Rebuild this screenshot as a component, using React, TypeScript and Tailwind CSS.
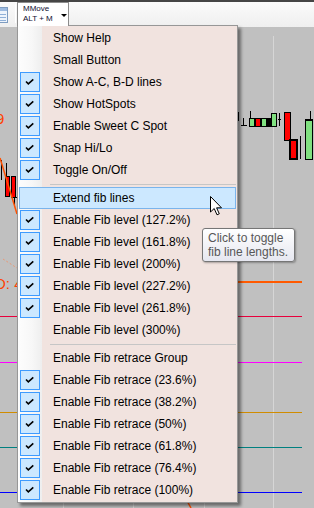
import React from 'react'

type Item = { label: string; checked?: boolean; hot?: boolean }

const groupA: Item[] = [
  { label: 'Show Help' },
  { label: 'Small Button' },
  { label: 'Show A-C, B-D lines', checked: true },
  { label: 'Show HotSpots', checked: true },
  { label: 'Enable Sweet C Spot', checked: true },
  { label: 'Snap Hi/Lo', checked: true },
  { label: 'Toggle On/Off', checked: true },
]

const groupB: Item[] = [
  { label: 'Extend fib lines', hot: true },
  { label: 'Enable Fib level (127.2%)', checked: true },
  { label: 'Enable Fib level (161.8%)', checked: true },
  { label: 'Enable Fib level (200%)', checked: true },
  { label: 'Enable Fib level (227.2%)', checked: true },
  { label: 'Enable Fib level (261.8%)', checked: true },
  { label: 'Enable Fib level (300%)' },
]

const groupC: Item[] = [
  { label: 'Enable Fib retrace Group' },
  { label: 'Enable Fib retrace (23.6%)', checked: true },
  { label: 'Enable Fib retrace (38.2%)', checked: true },
  { label: 'Enable Fib retrace (50%)', checked: true },
  { label: 'Enable Fib retrace (61.8%)', checked: true },
  { label: 'Enable Fib retrace (76.4%)', checked: true },
  { label: 'Enable Fib retrace (100%)', checked: true },
]

function CheckBox() {
  return (
    <div className="w-[20px] h-[20px] border border-[#3d9bff] bg-[#cce8ff] shrink-0">
      <svg width="18" height="18" viewBox="0 0 18 18">
        <path d="M5 8.5 L7.3 10.8 L12.3 6.3" fill="none" stroke="#000" strokeWidth="1.6" />
      </svg>
    </div>
  )
}

function MenuItem({ item }: { item: Item }) {
  return (
    <div
      className={
        item.hot
          ? 'h-[22px] mx-[1px] flex items-center border border-[#7ab4ec] bg-[#cce8ff]'
          : 'h-[22px] mx-[1px] flex items-center border border-transparent'
      }
    >
      {item.checked ? <CheckBox /> : <div className="w-[20px] h-[20px] shrink-0" />}
      <span className="ml-[13px] text-[12px] text-black whitespace-nowrap">{item.label}</span>
    </div>
  )
}

function Separator() {
  return (
    <div className="h-[6px] pt-[3px] pl-[32px] pr-[1px]">
      <div className="h-px bg-[#c6c6c6]" />
    </div>
  )
}

function Chart() {
  return (
    <svg className="absolute left-0 top-0" width="314" height="481" viewBox="0 27 314 481">
      {/* grid */}
      <line x1="63.5" y1="36" x2="63.5" y2="508" stroke="#d6d6d6" />
      <line x1="133.5" y1="36" x2="133.5" y2="508" stroke="#d6d6d6" />
      <line x1="204.5" y1="36" x2="204.5" y2="508" stroke="#d6d6d6" />
      <line x1="273.5" y1="36" x2="273.5" y2="508" stroke="#d6d6d6" />

      {/* fib lines */}
      <line x1="237" y1="282" x2="302" y2="282" stroke="#ff5a00" strokeWidth="2" />
      <line x1="0" y1="316.5" x2="302" y2="316.5" stroke="#e8003c" />
      <line x1="0" y1="362.5" x2="302" y2="362.5" stroke="#ff00ff" />
      <line x1="0" y1="412.5" x2="302" y2="412.5" stroke="#d08c00" />
      <line x1="0" y1="447.5" x2="302" y2="447.5" stroke="#008080" />
      <line x1="0" y1="492.5" x2="302" y2="492.5" stroke="#0000ff" />

      {/* left side candles */}
      <line x1="1.5" y1="160" x2="1.5" y2="180" stroke="#000" />
      <line x1="6.5" y1="163" x2="6.5" y2="176" stroke="#000" />
      <rect x="5" y="176" width="5" height="21" fill="#000" />
      <rect x="6" y="177" width="3" height="19" fill="#ff0000" />
      <rect x="11" y="176" width="5" height="22" fill="#000" />
      <rect x="12" y="177" width="3" height="20" fill="#ff0000" />
      <line x1="11" y1="197.5" x2="17" y2="197.5" stroke="#000" />
      <line x1="14.5" y1="197" x2="14.5" y2="205" stroke="#000" />
      <line x1="0" y1="158" x2="17" y2="214" stroke="#ff5000" strokeWidth="1.5" />
      <line x1="3" y1="259" x2="17" y2="268" stroke="#e89a78" strokeDasharray="2 2" />
      <line x1="186" y1="499" x2="191" y2="508" stroke="#ff5000" strokeWidth="1.5" />

      {/* right side candles */}
      <line x1="238.5" y1="112" x2="238.5" y2="120" stroke="#000" />
      <line x1="236" y1="120.5" x2="239" y2="120.5" stroke="#000" />
      <line x1="243.5" y1="118" x2="243.5" y2="125" stroke="#000" />
      <line x1="241" y1="125.5" x2="247" y2="125.5" stroke="#000" />
      <line x1="250.5" y1="111" x2="250.5" y2="118" stroke="#000" />
      <rect x="249" y="118" width="28" height="9" fill="#000" />
      <rect x="250" y="119" width="4" height="7" fill="#80e080" />
      <rect x="256" y="119" width="4" height="7" fill="#ff0000" />
      <rect x="262" y="119" width="4" height="7" fill="#80e080" />
      <rect x="271" y="113" width="6" height="14" fill="#000" />
      <rect x="272" y="114" width="4" height="12" fill="#80e080" />
      <line x1="279.5" y1="113" x2="279.5" y2="126" stroke="#000" />
      <line x1="278" y1="119.5" x2="281" y2="119.5" stroke="#000" />
      <rect x="284" y="112" width="7" height="29" fill="#000" />
      <rect x="285" y="113" width="5" height="27" fill="#ff0000" />
      <rect x="289" y="139" width="9" height="21" fill="#000" />
      <rect x="291" y="141" width="5" height="17" fill="#ff0000" />
      <line x1="300.5" y1="136" x2="300.5" y2="159" stroke="#000" />
      <line x1="310.5" y1="111" x2="310.5" y2="120" stroke="#000" />
      <rect x="305" y="119" width="8" height="41" fill="#000" />
      <rect x="306" y="121" width="6" height="38" fill="#80e080" />
    </svg>
  )
}

export default function App() {
  return (
    <div className="relative w-[314px] h-[508px] overflow-hidden bg-[#c0c0c0] font-['Liberation_Sans',Arial,sans-serif]">
      {/* toolbar */}
      <div className="h-[27px] border-t-2 border-[#454545] bg-gradient-to-b from-[#fbfbfb] to-[#efefef] flex items-start">
        <svg className="mt-[5px] -ml-[8px]" width="16" height="16" viewBox="0 0 16 16">
          <rect x="0.5" y="0.5" width="15" height="15" fill="#eef4fb" stroke="#7e9cc0" />
          <rect x="1" y="1" width="14" height="3" fill="#9dbbe0" />
          <line x1="2" y1="7.5" x2="14" y2="7.5" stroke="#8fb0d8" />
          <line x1="2" y1="10.5" x2="14" y2="10.5" stroke="#8fb0d8" />
          <line x1="2" y1="13.5" x2="14" y2="13.5" stroke="#8fb0d8" />
        </svg>
        <div className="ml-[7px] mt-[2px] w-px h-[19px] bg-[#b4b4b4] border-r border-white" />
        <div className="relative z-20 ml-[1px] w-[52px] h-[24px] border border-b-0 border-[#8c8c8c] bg-white pl-[5px] pt-[1px] text-[8px] leading-[10px] text-[#101030]">
          <div>MMove</div>
          <div>ALT + M</div>
          <div className="absolute left-[43px] top-[11px] w-0 h-0 border-l-[3px] border-r-[3px] border-t-[3px] border-l-transparent border-r-transparent border-t-black" />
        </div>
      </div>

      {/* chart canvas */}
      <div className="relative h-[481px]">
        <Chart />
        <span className="absolute left-[-4px] top-[84px] text-[15px] leading-[15px] text-[#ff4000]">9</span>
        <span className="absolute left-[-5px] top-[249px] text-[15px] leading-[15px] text-[#ff4000] whitespace-nowrap">D: 4</span>
      </div>

      {/* context menu */}
      <div className="absolute z-10 left-[17px] top-[25px] w-[221px] h-[478px] border border-[#979797] py-[1px] bg-[linear-gradient(90deg,#fdfdfd_0px,#f7f7f7_14px,#eeeeee_24px,#f1e3df_24px)] shadow-[3px_3px_3px_rgba(0,0,0,0.45)]">
        {groupA.map((it) => (
          <MenuItem key={it.label} item={it} />
        ))}
        <Separator />
        {groupB.map((it) => (
          <MenuItem key={it.label} item={it} />
        ))}
        <Separator />
        {groupC.map((it) => (
          <MenuItem key={it.label} item={it} />
        ))}
      </div>

      {/* mouse cursor */}
      <svg className="absolute z-30 left-[210px] top-[196px]" width="13" height="20" viewBox="0 0 13 20">
        <path d="M0.5 0.5 L0.5 16 L4.2 12.5 L7 18.8 L9.3 17.8 L6.6 11.8 L11.5 11.8 Z" fill="#fff" stroke="#000" strokeWidth="1" strokeLinejoin="round" />
      </svg>

      {/* tooltip */}
      <div className="absolute z-30 left-[202px] top-[228px] w-[93px] h-[34px] border border-[#767676] rounded-[3px] bg-gradient-to-b from-white to-[#e6e7f0] shadow-[1px_1px_2px_rgba(0,0,0,0.3)] pl-[5px] pt-[2px] text-[12px] leading-[14px] text-[#575757] whitespace-nowrap">
        <div>Click to toggle</div>
        <div>fib line lengths.</div>
      </div>
    </div>
  )
}
